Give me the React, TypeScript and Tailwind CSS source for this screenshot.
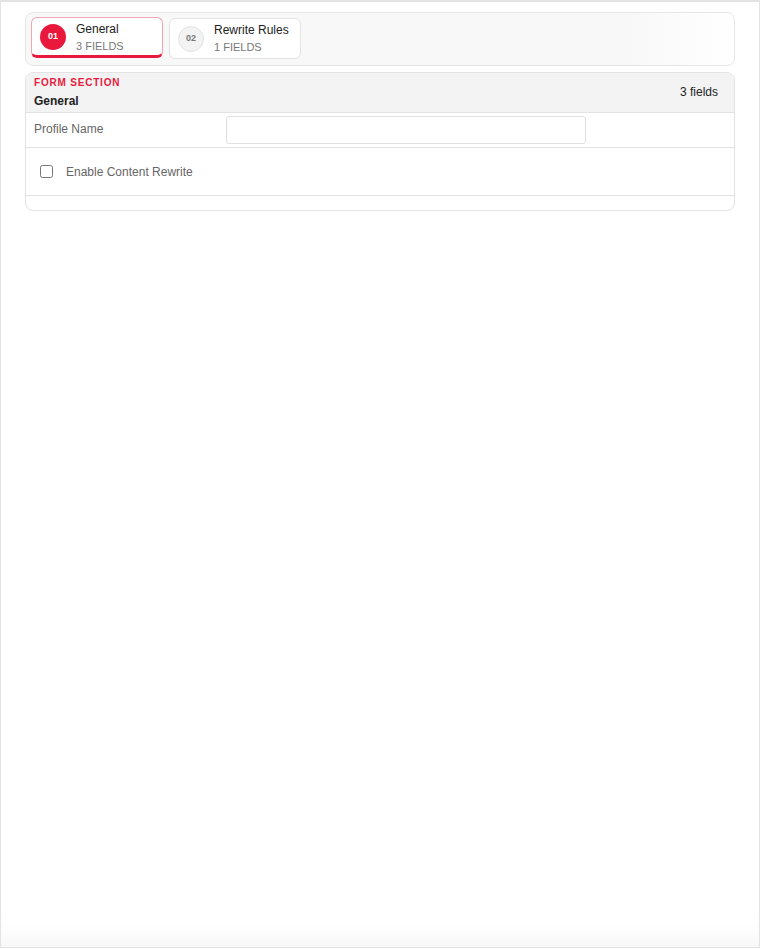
import { useState } from "react";

const tabs = [
  { num: "01", title: "General", fields: "3 FIELDS" },
  { num: "02", title: "Rewrite Rules", fields: "1 FIELDS" },
];

export default function App() {
  const [active, setActive] = useState(0);
  const [profile, setProfile] = useState("");
  const [enabled, setEnabled] = useState(false);

  return (
    <div className="h-[948px] w-[760px] border border-t-2 border-[#e3e3e3] bg-white font-['Liberation_Sans',Arial,sans-serif] shadow-[inset_0_-22px_22px_-14px_rgba(0,0,0,0.04)]">
      <div className="px-6 pt-[10px]">
        {/* Tabs */}
        <div className="flex gap-[6px] rounded-lg border border-[#e6e6e6] bg-[linear-gradient(to_right,#f8f8f8_85%,#ffffff)] px-[5px] pt-[4px] pb-[6px]">
          {tabs.map((t, i) => {
            const on = i === active;
            return (
              <button
                key={t.num}
                onClick={() => setActive(i)}
                className={
                  on
                    ? "flex h-[41px] w-[132px] items-center gap-[10px] rounded-md border border-[#f2a5b3] border-b-[3px] border-b-[#e8193c] bg-white px-2 text-left"
                    : "mt-px flex h-[41px] w-[132px] items-center gap-[10px] rounded-md border border-[#e3e3e3] bg-white px-2 text-left"
                }
              >
                <span
                  className={
                    on
                      ? "mt-[1px] flex h-[26px] w-[26px] shrink-0 items-center justify-center rounded-full bg-[#e8193c] text-[9px] font-bold text-white"
                      : "flex h-[26px] w-[26px] shrink-0 items-center justify-center rounded-full border border-[#e3e3e3] bg-[#f3f3f3] text-[9px] font-bold text-[#777]"
                  }
                >
                  {t.num}
                </span>
                <span className={on ? "flex flex-col pt-[2px] leading-[17px]" : "flex flex-col leading-[17px]"}>
                  <span className="text-[12px] text-[#222]">{t.title}</span>
                  <span className="text-[11px] text-[#777]">{t.fields}</span>
                </span>
              </button>
            );
          })}
        </div>

        {/* Form section */}
        <div className="mt-[6px] overflow-hidden rounded-lg border border-[#e3e3e3] bg-white">
          <div className="flex items-center justify-between border-b border-[#e3e3e3] bg-[#f3f3f3] pl-2 pr-4 pt-[3px] pb-[2px]">
            <div>
              <div className="text-[10px] leading-[14px] font-bold tracking-[0.08em] text-[#e8193c]">FORM SECTION</div>
              <div className="mt-[3px] text-[12px] leading-[17px] font-bold text-[#222]">General</div>
            </div>
            <div className="mb-[2px] text-[12px] text-[#222]">3 fields</div>
          </div>

          <div className="flex h-[35px] items-center border-b border-[#e3e3e3] pl-2">
            <label className="mb-[2px] w-[192px] text-[12px] text-[#666]">Profile Name</label>
            <input
              value={profile}
              onChange={(e) => setProfile(e.target.value)}
              className="h-[28px] w-[360px] rounded-[3px] border border-[#e0e0e0] px-2 text-[12px] outline-none"
            />
          </div>

          <label className="flex h-[48px] items-center gap-[13px] border-b border-[#e3e3e3] pl-[14px]">
            <input
              type="checkbox"
              checked={enabled}
              onChange={(e) => setEnabled(e.target.checked)}
              className="h-[13px] w-[13px]"
            />
            <span className="text-[12px] text-[#666]">Enable Content Rewrite</span>
          </label>

          <div className="h-[14px]" />
        </div>
      </div>
    </div>
  );
}
